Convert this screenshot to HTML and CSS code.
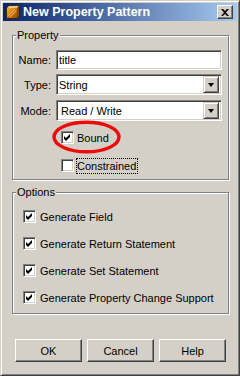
FILE: index.html
```html
<html>
<head>
  <title>New Property Pattern</title>
  <link rel="stylesheet" href="styles.css">
</head>
<body>

  <div class="window">
    <div class="titlebar">
      <svg class="app-icon" width="16" height="16" viewBox="0 0 16 16">
        <defs>
          <linearGradient id="front" x1="0" y1="0" x2="1" y2="1">
            <stop offset="0" stop-color="#f7b040"/>
            <stop offset="0.5" stop-color="#d27a10"/>
            <stop offset="1" stop-color="#8a4a08"/>
          </linearGradient>
        </defs>
        <path d="M1 4 L4 1 L15 1 L15 12 L12 15 L1 15 Z" fill="#3a2a10"/>
        <path d="M2 4 L4 2 L14 2 L12 4 Z" fill="#e8c890"/>
        <path d="M12 4 L14 2 L14 12 L12 14 Z" fill="#7a4a10"/>
        <rect x="2" y="4" width="10" height="10" fill="url(#front)"/>
        <path d="M3 12 L10 5 M5 13 L11 7" stroke="#ffd070" stroke-width="1" opacity="0.7"/>
      </svg>
      <span class="title">New Property Pattern</span>
      <div class="close">
        <svg width="8" height="7" viewBox="0 0 8 7">
          <path d="M0 0 H2 L4 2 L6 0 H8 L5 3.5 L8 7 H6 L4 5 L2 7 H0 L3 3.5 Z" fill="#000"/>
        </svg>
      </div>
    </div>

    <div class="content">
      <div class="group group-property">
        <span class="legend">Property</span>

        <div class="field-row">
          <span class="field-label">Name:</span>
          <div class="textbox">title</div>
        </div>
        <div class="field-row combo-row">
          <span class="field-label">Type:</span>
          <div class="textbox combo">
            <span class="combo-value">String</span>
            <span class="drop"><span class="arrow"></span></span>
          </div>
        </div>
        <div class="field-row combo-row mode-row">
          <span class="field-label">Mode:</span>
          <div class="textbox combo">
            <span class="combo-value mode-value">Read / Write</span>
            <span class="drop"><span class="arrow"></span></span>
          </div>
        </div>

        <div class="checks sub-checks">
          <div class="check">
            <span class="box"><svg width="9" height="9" viewBox="0 0 9 9"><path d="M1 3 L3 5 L7 1 V4 L3 8 L1 6 Z" fill="#000"/></svg></span>
            <span class="check-label">Bound</span>
          </div>
          <div class="check">
            <span class="box"></span>
            <span class="check-label focus">Constrained</span>
          </div>
        </div>

        <!-- red annotation ring drawn over the dialog -->
        <svg class="annotation" width="70" height="35" viewBox="0 0 70 35">
          <ellipse cx="34.5" cy="17" rx="32.5" ry="14.8" fill="none" stroke="#ee0a0a" stroke-width="3.4"/>
        </svg>
      </div>

      <div class="group group-options">
        <span class="legend">Options</span>
        <div class="checks option-checks">
          <div class="check">
            <span class="box"><svg width="9" height="9" viewBox="0 0 9 9"><path d="M1 3 L3 5 L7 1 V4 L3 8 L1 6 Z" fill="#000"/></svg></span>
            <span class="check-label">Generate Field</span>
          </div>
          <div class="check">
            <span class="box"><svg width="9" height="9" viewBox="0 0 9 9"><path d="M1 3 L3 5 L7 1 V4 L3 8 L1 6 Z" fill="#000"/></svg></span>
            <span class="check-label">Generate Return Statement</span>
          </div>
          <div class="check">
            <span class="box"><svg width="9" height="9" viewBox="0 0 9 9"><path d="M1 3 L3 5 L7 1 V4 L3 8 L1 6 Z" fill="#000"/></svg></span>
            <span class="check-label">Generate Set Statement</span>
          </div>
          <div class="check">
            <span class="box"><svg width="9" height="9" viewBox="0 0 9 9"><path d="M1 3 L3 5 L7 1 V4 L3 8 L1 6 Z" fill="#000"/></svg></span>
            <span class="check-label">Generate Property Change Support</span>
          </div>
        </div>
      </div>

      <div class="buttons">
        <div class="btn">OK</div>
        <div class="btn">Cancel</div>
        <div class="btn">Help</div>
      </div>
    </div>
  </div>

</body>
</html>
```

FILE: styles.css
```css
body {
  margin: 0;
  background-color: #d4d0c8;
  font-family: "Liberation Sans", Arial, sans-serif;
  font-size: 11px;
  color: #000;
}

.window {
  box-sizing: border-box;
  width: 240px;
  height: 376px;
  padding: 2px;
  border: 1px solid;
  border-color: #d4d0c8 #404040 #404040 #d4d0c8;
  box-shadow: inset 1px 1px 0 #fff, inset -1px -1px 0 #808080;
  background-color: #d4d0c8;
}

/* title bar */
.titlebar {
  height: 18px;
  display: flex;
  align-items: center;
  padding: 0 4px 0 2px;
  background: linear-gradient(to right, #0a246a, #a6caf0);
}

.app-icon {
  flex: none;
}

.title {
  flex: 1;
  margin-left: 2px;
  color: #fff;
  font-weight: bold;
  font-size: 12.5px;
  white-space: nowrap;
}

.close {
  box-sizing: border-box;
  width: 16px;
  height: 14px;
  display: flex;
  align-items: center;
  justify-content: center;
  background-color: #d4d0c8;
  border: 1px solid;
  border-color: #fff #404040 #404040 #fff;
  box-shadow: inset -1px -1px 0 #808080;
}

/* dialog body */
.content {
  padding: 14px 8px 0 9px;
}

.group {
  position: relative;
  box-sizing: border-box;
  border: 1px solid #808080;
  box-shadow: inset 1px 1px 0 #fff, 1px 1px 0 #fff;
}

.group-property {
  height: 145px;
  padding: 14px 4px 0 0;
}

.group-options {
  height: 122px;
  margin-top: 12px;
  padding-top: 15px;
}

.legend {
  position: absolute;
  top: -8px;
  left: 3px;
  padding: 0 1px;
  background-color: #d4d0c8;
  line-height: 14px;
}

/* text fields */
.field-row {
  display: flex;
  align-items: center;
  height: 20px;
}

.combo-row {
  height: 21px;
  margin-top: 4px;
}

.mode-row {
  margin-top: 5px;
}

.field-label {
  width: 38px;
  margin-right: 5px;
  text-align: right;
}

.textbox {
  box-sizing: border-box;
  width: 166px;
  height: 100%;
  display: flex;
  align-items: center;
  padding-left: 2px;
  background-color: #fff;
  border: 1px solid;
  border-color: #808080 #fff #fff #808080;
  box-shadow: inset 1px 1px 0 #404040, inset -1px -1px 0 #d4d0c8;
}

.combo {
  padding: 2px;
}

.combo-value {
  flex: 1;
}

.mode-value {
  padding-left: 2px;
}

.drop {
  box-sizing: border-box;
  width: 16px;
  height: 17px;
  display: flex;
  align-items: center;
  justify-content: center;
  background-color: #d4d0c8;
  border: 1px solid;
  border-color: #d4d0c8 #404040 #404040 #d4d0c8;
  box-shadow: inset 1px 1px 0 #fff, inset -1px -1px 0 #808080;
}

.arrow {
  width: 0;
  height: 0;
  border-left: 3.5px solid transparent;
  border-right: 3.5px solid transparent;
  border-top: 4px solid #000;
}

/* check boxes */
.checks {
  display: flex;
  flex-direction: column;
}

.sub-checks {
  margin-top: 8px;
  padding-left: 48px;
  gap: 11px;
}

.option-checks {
  padding-left: 10px;
  gap: 10px;
}

.check {
  display: flex;
  align-items: center;
  height: 17px;
}

.box {
  box-sizing: border-box;
  width: 13px;
  height: 13px;
  display: flex;
  align-items: center;
  justify-content: center;
  background-color: #fff;
  border: 1px solid;
  border-color: #808080 #fff #fff #808080;
  box-shadow: inset 1px 1px 0 #404040, inset -1px -1px 0 #d4d0c8;
}

.check-label {
  margin-left: 4px;
}

.sub-checks .check-label {
  margin-left: 3px;
}

.focus {
  margin-left: 2px !important;
  padding: 0 1px 0 0;
  line-height: 14px;
  border: 1px dotted #000;
}

.annotation {
  position: absolute;
  left: 39px;
  top: 84px;
}

/* bottom buttons */
.buttons {
  display: flex;
  gap: 5px;
  margin-top: 25px;
  padding-left: 3px;
}

.btn {
  box-sizing: border-box;
  width: 67px;
  height: 23px;
  display: flex;
  align-items: center;
  justify-content: center;
  border: 1px solid;
  border-color: #fff #404040 #404040 #fff;
  box-shadow: inset -1px -1px 0 #808080;
}
```
